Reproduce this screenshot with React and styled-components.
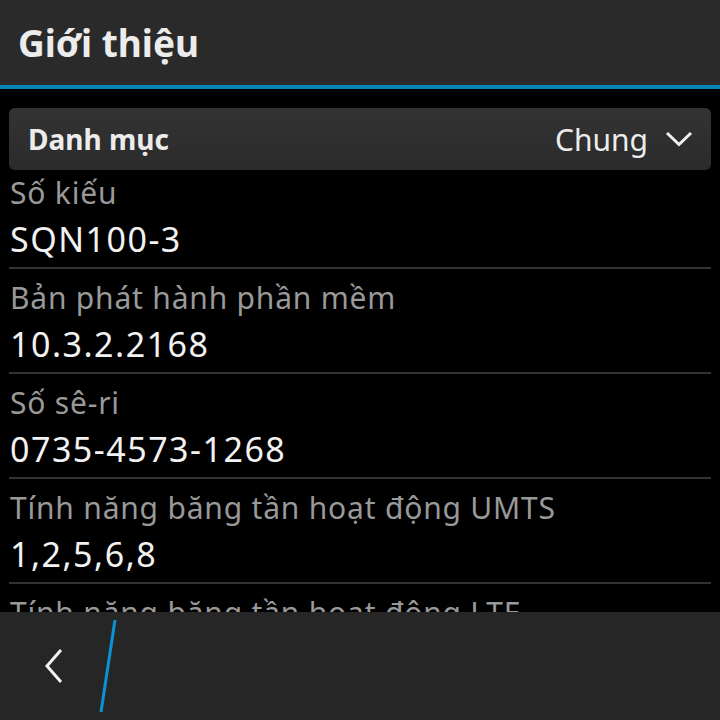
import styled, { createGlobalStyle } from "styled-components";

const GlobalStyle = createGlobalStyle`
  html, body {
    margin: 0;
    padding: 0;
    background: #000;
  }
  body {
    font-family: "Noto Sans", "Open Sans", sans-serif;
  }
`;

const rows = [
  { label: "Số kiếu", value: "SQN100-3" },
  { label: "Bản phát hành phần mềm", value: "10.3.2.2168" },
  { label: "Số sê-ri", value: "0735-4573-1268" },
  { label: "Tính năng băng tần hoạt động UMTS", value: "1,2,5,6,8" },
  { label: "Tính năng băng tần hoạt động LTE", value: "2,3,4,5,7,8,13,17,20" },
];

export default function App() {
  return (
    <>
      <GlobalStyle />
      <Screen>
        <TitleBar>
          <Title>Giới thiệu</Title>
        </TitleBar>
        <Content>
          <Dropdown>
            <DropLabel>Danh mục</DropLabel>
            <DropValue>
              Chung
              <svg width="28" height="16" viewBox="0 0 28 16">
                <path d="M2 2 L14 13.5 L26 2" fill="none" stroke="#f2f2f2" strokeWidth="3" />
              </svg>
            </DropValue>
          </Dropdown>
          <List>
            {rows.map((r, i) => (
              <Row key={r.label} $first={i === 0}>
                <Label>{r.label}</Label>
                <Value>{r.value}</Value>
              </Row>
            ))}
          </List>
        </Content>
        <ActionBar>
          <BackButton>
            <svg width="24" height="38" viewBox="0 0 24 38">
              <path d="M19 3 L5 19 L19 35" fill="none" stroke="#f2f2f2" strokeWidth="3" />
            </svg>
          </BackButton>
          <svg width="20" height="96" viewBox="0 0 20 96">
            <path d="M17 2 L3 94" stroke="#0a93d4" strokeWidth="3" />
          </svg>
        </ActionBar>
      </Screen>
    </>
  );
}

const Screen = styled.div`
  height: 720px;
  width: 720px;
  display: flex;
  flex-direction: column;
  overflow: hidden;
  background: #000;
`;

const TitleBar = styled.div`
  height: 85px;
  flex-shrink: 0;
  background: #2a2a2a;
  border-bottom: 4px solid #0a84b8;
  display: flex;
  align-items: center;
  padding-left: 18px;
`;

const Title = styled.h1`
  margin: 0;
  font-size: 37px;
  font-weight: 700;
  color: #ececec;
`;

const Content = styled.div`
  flex: 1;
  overflow: hidden;
  padding: 19px 9px 0;
`;

const Dropdown = styled.div`
  height: 62px;
  border-radius: 6px;
  background: linear-gradient(#333333, #2b2b2b);
  display: flex;
  align-items: center;
  justify-content: space-between;
  padding: 0 18px 0 19px;
`;

const DropLabel = styled.span`
  font-size: 28px;
  font-weight: 700;
  color: #ececec;
`;

const DropValue = styled.span`
  display: flex;
  align-items: center;
  gap: 17px;
  font-size: 30px;
  color: #ececec;
`;

const List = styled.div`
  display: flex;
  flex-direction: column;
`;

const Row = styled.div`
  padding: ${(p) => (p.$first ? "5px" : "11px")} 0 0 1px;
  border-bottom: 2px solid #333;
`;

const Label = styled.div`
  font-size: 30px;
  line-height: 36px;
  letter-spacing: 0.8px;
  color: #999;
  white-space: nowrap;
`;

const Value = styled.div`
  font-size: 34px;
  line-height: 56px;
  letter-spacing: 1.5px;
  color: #f2f2f2;
  white-space: nowrap;
`;

const ActionBar = styled.div`
  height: 108px;
  flex-shrink: 0;
  background: #262626;
  display: flex;
  align-items: center;
  gap: 32px;
  padding-left: 42px;
`;

const BackButton = styled.div`
  display: flex;
  align-items: center;
`;
